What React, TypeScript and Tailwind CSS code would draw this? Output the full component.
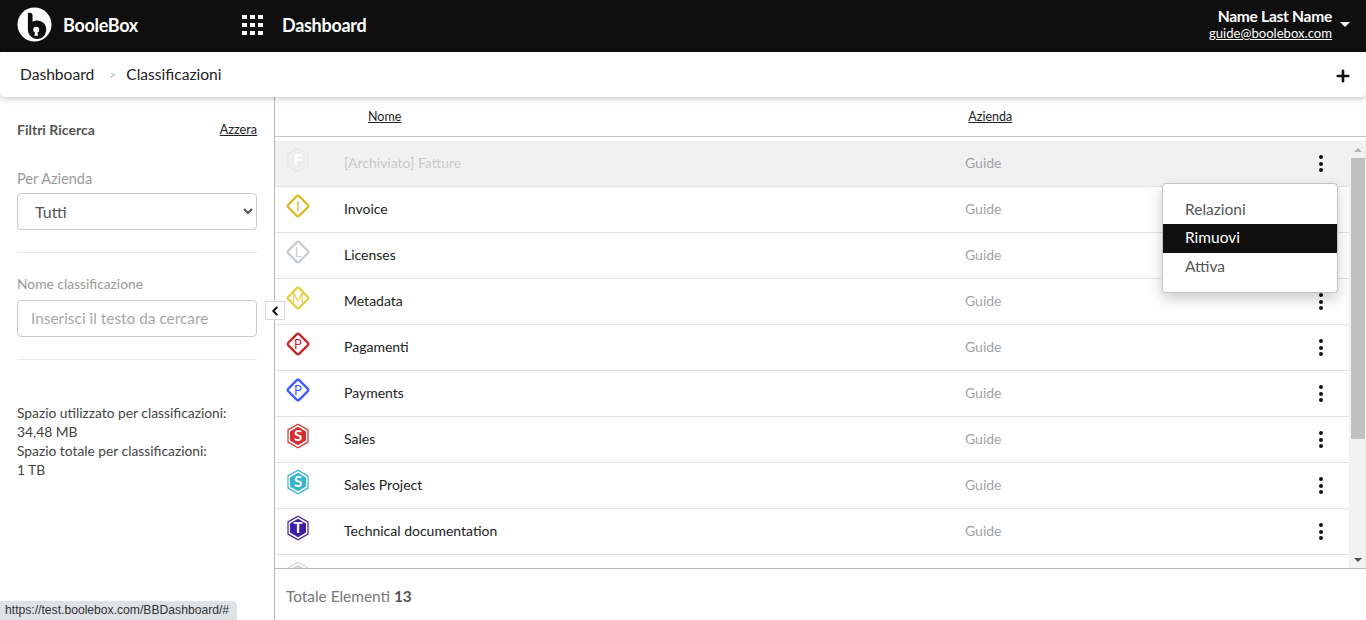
import { ChevronLeft, Plus } from 'lucide-react'

type Row = { nome: string; letter: string; shape: 'diamond' | 'hex'; color: string; archived?: boolean }

const rows: Row[] = [
  { nome: '[Archiviato] Fatture', letter: 'F', shape: 'hex', color: '#e6e6e6', archived: true },
  { nome: 'Invoice', letter: 'I', shape: 'diamond', color: '#d9bd2b' },
  { nome: 'Licenses', letter: 'L', shape: 'diamond', color: '#c9cdd2' },
  { nome: 'Metadata', letter: 'M', shape: 'diamond', color: '#e6cf45' },
  { nome: 'Pagamenti', letter: 'P', shape: 'diamond', color: '#c62828' },
  { nome: 'Payments', letter: 'P', shape: 'diamond', color: '#3d5afe' },
  { nome: 'Sales', letter: 'S', shape: 'hex', color: '#d32f2f' },
  { nome: 'Sales Project', letter: 'S', shape: 'hex', color: '#35b5cc' },
  { nome: 'Technical documentation', letter: 'T', shape: 'hex', color: '#3f1fa3' },
  { nome: '', letter: '', shape: 'hex', color: '#d5d5d5' },
]

function Logo() {
  return (
    <svg width="35" height="35" viewBox="0 0 36 36">
      <circle cx="18" cy="18" r="17.5" fill="#fff" />
      <path d="M11.2 5.9h2.2a2.6 2.6 0 0 1 2.6 2.6v6.6a9.5 9.5 0 1 1-4.8 8.6z" fill="#0f0f0f" />
      <circle cx="19.8" cy="23.3" r="3.1" fill="#fff" />
      <path d="M18.9 24.5h1.8l1 5h-3.8z" fill="#fff" />
    </svg>
  )
}

function ClassIcon({ row }: { row: Row }) {
  if (row.shape === 'diamond') {
    return (
      <svg width="26" height="26" viewBox="0 0 26 26">
        <path
          d="M11.6 3.4 Q13 2 14.4 3.4 L22.6 11.6 Q24 13 22.6 14.4 L14.4 22.6 Q13 24 11.6 22.6 L3.4 14.4 Q2 13 3.4 11.6 Z"
          fill="none"
          stroke={row.color}
          strokeWidth="2.3"
        />
        <text x="13" y="17.5" textAnchor="middle" fontSize="13" fontFamily="Lato" fill={row.color}>
          {row.letter}
        </text>
      </svg>
    )
  }
  return (
    <svg width="26" height="26" viewBox="0 0 26 26">
      <path d="M13 1.2 L23 6.9 V19.1 L13 24.8 L3 19.1 V6.9 Z" fill="none" stroke={row.color} strokeWidth="1.2" />
      <path d="M13 3.8 L21 8.4 V17.6 L13 22.2 L5 17.6 V8.4 Z" fill={row.archived ? '#eeeeee' : row.color} />
      <text x="13" y="18.2" textAnchor="middle" fontSize="15" fontWeight="700" fontFamily="Lato" fill="#fff">
        {row.letter}
      </text>
    </svg>
  )
}

function Dots() {
  return (
    <div className="flex flex-col gap-[2.5px]">
      <span className="h-1 w-1 rounded-full bg-[#111]" />
      <span className="h-1 w-1 rounded-full bg-[#111]" />
      <span className="h-1 w-1 rounded-full bg-[#111]" />
    </div>
  )
}

function ListRow({ row }: { row: Row }) {
  return (
    <div
      className={`flex h-[46px] shrink-0 items-center border-b border-[#e2e2e2] text-sm ${
        row.archived ? 'bg-[#f1f1f1]' : 'bg-white'
      }`}
    >
      <div className="mt-[-8px] w-[69px] shrink-0 pl-[10px]">
        <ClassIcon row={row} />
      </div>
      <div className={`mb-[2px] w-[621px] shrink-0 ${row.archived ? 'text-[#c9c9c9]' : 'text-[#222]'}`}>{row.nome}</div>
      <div className="mb-[2px] flex-1 text-[#a3a3a3]">{row.nome ? 'Guide' : ''}</div>
      {row.nome && (
        <div className="mr-[26px]">
          <Dots />
        </div>
      )}
    </div>
  )
}

function Scrollbar() {
  return (
    <div className="mt-[4px] flex w-[17px] shrink-0 flex-col items-center bg-[#f1f1f1]">
      <div className="flex h-[17px] items-center justify-center">
        <span className="h-0 w-0 border-x-[4px] border-b-[4px] border-x-transparent border-b-[#b0b0b0]" />
      </div>
      <div className="ml-[1px] h-[281px] w-[14px] bg-[#c1c1c1]" />
      <div className="flex-1" />
      <div className="flex h-[17px] items-center justify-center">
        <span className="h-0 w-0 border-x-[4px] border-t-[4px] border-x-transparent border-t-[#505050]" />
      </div>
    </div>
  )
}

export default function App() {
  return (
    <div className="relative flex h-[620px] w-[1366px] flex-col overflow-hidden bg-white font-['Lato',sans-serif] text-[#333]">
      <header className="flex h-[52px] shrink-0 items-center bg-[#0f0f0f] pb-[3px] text-white">
        <div className="ml-[17px] flex w-[225px] items-center gap-[11px]">
          <Logo />
          <span className="text-lg font-bold tracking-[-0.3px]">BooleBox</span>
        </div>
        <div className="grid w-[21px] grid-cols-3 gap-x-[3px] gap-y-[4px]">
          {Array.from({ length: 9 }).map((_, i) => (
            <span key={i} className="h-[4px] w-[5px] bg-white" />
          ))}
        </div>
        <span className="ml-[19px] text-lg font-bold tracking-[-0.3px]">Dashboard</span>
        <div className="ml-auto flex flex-col items-end leading-none">
          <span className="text-[15.6px] font-bold tracking-[-0.3px]">Name Last Name</span>
          <span className="mt-[2px] text-[13.1px] underline">guide@boolebox.com</span>
        </div>
        <span className="mr-[16px] ml-[8px] h-0 w-0 border-x-[5px] border-t-[5px] border-x-transparent border-t-white" />
      </header>

      <div className="z-10 flex h-[45px] shrink-0 items-center rounded-[5px] bg-white pr-[14px] pl-[20px] shadow-[0_2px_6px_rgba(0,0,0,0.2)]">
        <span className="text-[15.6px] text-[#222]">Dashboard</span>
        <span className="ml-[15px] text-xs text-[#bbb]">&gt;</span>
        <span className="ml-[10px] text-[15.6px] text-[#222]">Classificazioni</span>
        <Plus className="mt-[2px] ml-auto text-[#111]" size={18} strokeWidth={3.5} />
      </div>

      <div className="flex min-h-0 flex-1">
        <aside className="relative w-[275px] shrink-0 border-r border-[#b8b8b8] pt-[23px] pr-[17px] pl-[17px]">
          <div className="flex items-center justify-between">
            <span className="text-sm font-bold text-[#555]">Filtri Ricerca</span>
            <a href="#" className="text-[12.6px] text-[#222] underline">
              Azzera
            </a>
          </div>
          <div className="mt-[28px] text-[14.5px] text-[#999]">Per Azienda</div>
          <select className="mt-[3px] h-[37px] w-full rounded-[4px] border border-[#ccc] bg-white pl-[13px] text-base text-[#555]">
            <option>Tutti</option>
          </select>
          <div className="mt-[22px] border-t border-[#e8e8e8]" />
          <div className="mt-[21px] text-[13.8px] text-[#999]">Nome classificazione</div>
          <input
            className="mt-[6px] h-[37px] w-full rounded-[4px] border border-[#ccc] px-[13px] pb-[2px] text-[15.4px] placeholder:text-[#a8a8a8]"
            placeholder="Inserisci il testo da cercare"
          />
          <div className="mt-[22px] border-t border-[#e8e8e8]" />
          <div className="mt-[43px] text-[13.8px] leading-[19px] text-[#444]">
            <div>Spazio utilizzato per classificazioni:</div>
            <div>34,48 MB</div>
            <div>Spazio totale per classificazioni:</div>
            <div>1 TB</div>
          </div>
          <button className="absolute top-[204px] right-[-11px] flex h-[19px] w-[20px] items-center justify-center border border-[#d8d8d8] bg-white">
            <ChevronLeft size={14} strokeWidth={3.5} className="text-[#111]" />
          </button>
        </aside>

        <main className="flex min-w-0 flex-1 flex-col">
          <div className="flex h-[40px] shrink-0 items-center border-b border-[#c4c4c4] pt-[2px] text-[12.5px] text-[#222]">
            <a href="#" className="ml-[93px] underline">
              Nome
            </a>
            <a href="#" className="ml-[567px] underline">
              Azienda
            </a>
          </div>
          <div className="flex h-[432px] shrink-0 border-b border-[#b5b5b5]">
            <div className="flex min-w-0 flex-1 flex-col overflow-hidden pt-[4px]">
              {rows.map((r, i) => (
                <ListRow key={i} row={r} />
              ))}
            </div>
            <Scrollbar />
          </div>
          <div className="flex flex-1 items-center pt-[5px] pl-[11px] text-[15.4px] text-[#777]">
            Totale Elementi&nbsp;<b className="text-[#555]">13</b>
          </div>
        </main>
      </div>

      <div className="absolute top-[183px] left-[1162px] w-[176px] rounded-[4px] border border-[#c4c4c4] bg-white pt-[11px] pb-[10px] text-[15.5px] text-[#555] shadow-[0_6px_14px_rgba(0,0,0,0.2)]">
        <div className="flex h-[29px] items-center pl-[22px]">Relazioni</div>
        <div className="flex h-[29px] items-center bg-[#0f0f0f] pb-[2px] pl-[22px] text-white">Rimuovi</div>
        <div className="flex h-[29px] items-center pb-[2px] pl-[22px]">Attiva</div>
      </div>

      <div className="absolute bottom-0 left-0 flex h-[19px] w-[237px] items-center rounded-tr-[5px] bg-[#dee1e6] pl-[5px] font-['Liberation_Sans',sans-serif] text-[12.15px] text-[#333]">
        https://test.boolebox.com/BBDashboard/#
      </div>
    </div>
  )
}
